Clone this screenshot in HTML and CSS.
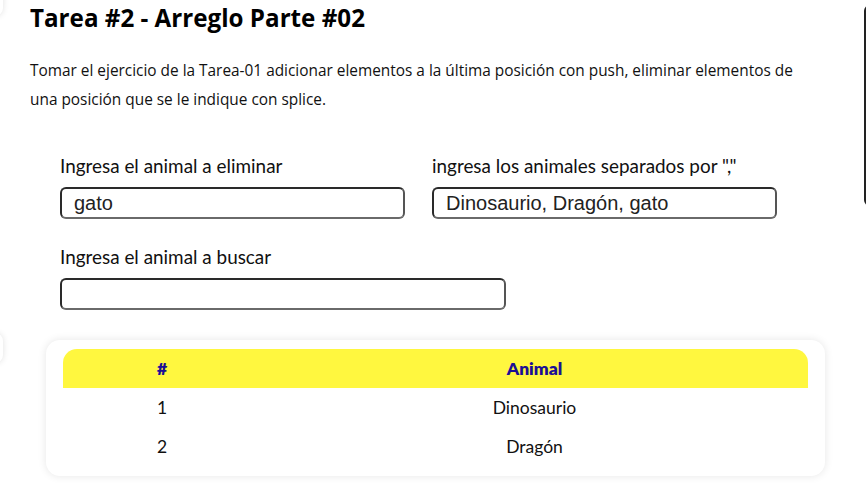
FILE: index.html
```html
<!DOCTYPE html>
<html lang="es">
<head>
<meta charset="utf-8">
<title>Tarea #2 - Arreglo Parte #02</title>
<link rel="stylesheet" href="styles.css">
</head>
<body>
<div class="edge-top"></div>
<div class="edge-mid"></div>
<div class="edge-right"></div>
<main class="page">
  <h1 class="title">Tarea #2 - Arreglo Parte #02</h1>
  <p class="desc">Tomar el ejercicio de la Tarea-01 adicionar elementos a la última posición con push, eliminar elementos de una posición que se le indique con splice.</p>
  <section class="form">
    <div class="row">
      <label class="field">
        <span class="label">Ingresa el animal a eliminar</span>
        <input class="input w345" type="text" value="gato">
      </label>
      <label class="field">
        <span class="label">ingresa los animales separados por ","</span>
        <input class="input w345" type="text" value="Dinosaurio, Dragón, gato">
      </label>
    </div>
    <div class="row">
      <label class="field">
        <span class="label">Ingresa el animal a buscar</span>
        <input class="input w446" type="text" value="">
      </label>
    </div>
  </section>
  <section class="card">
    <table class="table">
      <thead>
        <tr><th class="c1">#</th><th>Animal</th></tr>
      </thead>
      <tbody>
        <tr><td>1</td><td>Dinosaurio</td></tr>
        <tr><td>2</td><td>Dragón</td></tr>
      </tbody>
    </table>
  </section>
</main>
</body>
</html>
```
FILE: styles.css
```css
html, body {
  margin: 0;
  padding: 0;
  background: #ffffff;
}
body {
  position: relative;
  width: 866px;
  height: 483px;
  overflow: hidden;
  font-family: "Open Sans", "Noto Sans", sans-serif;
  color: #000;
}
.edge-top {
  position: absolute;
  left: -40px;
  top: -40px;
  width: 43px;
  height: 56px;
  border-radius: 8px;
  background: #fff;
  box-shadow: 0 0 6px rgba(0,0,0,0.12);
}
.edge-mid {
  position: absolute;
  left: -40px;
  top: 333px;
  width: 43px;
  height: 30px;
  border-radius: 8px;
  background: #fff;
  box-shadow: 0 0 6px rgba(0,0,0,0.12);
}
.edge-right {
  position: absolute;
  left: 864px;
  top: 5px;
  width: 40px;
  height: 201px;
  border: 2px solid #222;
  border-radius: 6px;
  box-sizing: border-box;
}
.page {
  padding: 0 0 0 30px;
}
.title {
  margin: 0;
  padding-top: 2px;
  font-family: "Open Sans", sans-serif;
  font-weight: 700;
  font-size: 24.2px;
  line-height: 32px;
  letter-spacing: 0;
}
.desc {
  margin: 22px 0 0 0;
  width: 790px;
  font-family: "Open Sans", sans-serif;
  font-size: 15.4px;
  line-height: 29px;
  color: #111;
}
.form {
  padding: 41px 0 0 30px;
  display: flex;
  flex-direction: column;
  gap: 27px;
}
.row {
  display: flex;
  gap: 27px;
}
.field {
  display: flex;
  flex-direction: column;
  gap: 10px;
}
.label {
  font-family: "Lato", sans-serif;
  font-size: 18.9px;
  line-height: 22px;
  color: #111;
}
.input {
  box-sizing: border-box;
  height: 32px;
  margin: 0;
  padding: 0 12px;
  border: 2px solid #2a2a2a;
  border-bottom-color: #6a6a6a;
  border-right-color: #555;
  border-radius: 6px;
  font-family: "Liberation Sans", Arial, sans-serif;
  font-size: 20px;
  color: #222;
  background: #fff;
  outline: none;
}
.w345 { width: 345px; }
.w446 { width: 446px; }
.card {
  margin: 30px 0 0 16px;
  width: 779px;
  box-sizing: border-box;
  padding: 9px 17px 10px 17px;
  background: #fff;
  border-radius: 14px;
  box-shadow: 0 0 8px rgba(0,0,0,0.10);
}
.table {
  width: 100%;
  border-collapse: separate;
  border-spacing: 0;
  font-family: "Lato", sans-serif;
}
.table th {
  height: 39px;
  padding: 0;
  background: #fff73f;
  color: #1b0f95;
  font-weight: 800;
  font-size: 17.5px;
  text-align: center;
}
.table th.c1 {
  width: 198px;
  border-top-left-radius: 14px;
}
.table th:last-child {
  border-top-right-radius: 14px;
}
.table td {
  height: 39px;
  padding: 0;
  text-align: center;
  font-size: 17.5px;
  color: #111;
}
```
